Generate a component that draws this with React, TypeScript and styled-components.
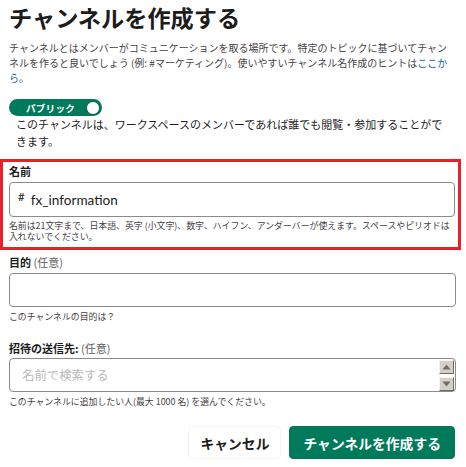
import React from "react";
import styled, { createGlobalStyle } from "styled-components";

const GlobalStyle = createGlobalStyle`
  html, body { margin: 0; padding: 0; background: #ffffff; }
  body {
    font-family: "Lato", "Noto Sans CJK JP", sans-serif;
    color: #1d1c1d;
  }
  * { box-sizing: border-box; }
`;

const JP = `"Noto Sans CJK JP", "Noto Sans", sans-serif`;
const GREEN = "#007a5a";

const Page = styled.div`
  width: 466px;
  padding: 2px 10px 0 9px;
  display: flex;
  flex-direction: column;
`;

const Title = styled.h1`
  margin: 0;
  font-family: ${JP};
  font-size: 23.2px;
  line-height: 30px;
  font-weight: 700;
  color: #1d1c1d;
`;

const Description = styled.p`
  margin: 8px 0 0;
  font-family: ${JP};
  font-size: 10px;
  line-height: 15px;
  color: #454245;
`;

const Link = styled.a`
  color: #1264a3;
  text-decoration: none;
`;

const Toggle = styled.div`
  margin-top: 14px;
  align-self: flex-start;
  width: 93px;
  height: 17px;
  border-radius: 9px;
  background: ${GREEN};
  display: flex;
  align-items: center;
  justify-content: space-between;
  padding: 0 2px 0 17px;
`;

const ToggleText = styled.span`
  font-family: ${JP};
  font-size: 9.6px;
  font-weight: 700;
  color: #ffffff;
  letter-spacing: 0.2px;
`;

const Knob = styled.span`
  width: 14px;
  height: 14px;
  border-radius: 50%;
  background: #ffffff;
  border: 1px solid #0b5e44;
`;

const ToggleNote = styled.p`
  margin: 0;
  padding: 0 4px 0 7px;
  font-family: ${JP};
  font-size: 11px;
  line-height: 17px;
  color: #1d1c1d;
`;

const Highlight = styled.section`
  margin: 9px -5px 0 -9px;
  border: 3px solid #e8202a;
  padding: 2px 3px 5px 6px;
  display: flex;
  flex-direction: column;
`;

const Field = styled.div<{ $top: number }>`
  margin-top: ${(p) => p.$top}px;
  display: flex;
  flex-direction: column;
`;

const Label = styled.label`
  font-family: ${JP};
  font-size: 11px;
  line-height: 14px;
  font-weight: 700;
  color: #1d1c1d;
`;

const Optional = styled.span`
  font-weight: 400;
  color: #616061;
`;

const InputBox = styled.div<{ $h: number; $gap: number }>`
  margin-top: ${(p) => p.$gap}px;
  height: ${(p) => p.$h}px;
  border: 1px solid #8b8b8b;
  border-radius: 4px;
  background: #fff;
  display: flex;
  align-items: center;
  padding-left: 8px;
`;

const Hash = styled.span`
  font-family: "Lato", sans-serif;
  font-size: 11.5px;
  color: #1d1c1d;
  margin-right: 6px;
  transform: translateY(-3px);
`;

const Value = styled.span`
  font-family: "Lato", ${JP};
  font-size: 13.6px;
  color: #1d1c1d;
`;

const Placeholder = styled.span`
  font-family: ${JP};
  font-size: 12.4px;
  color: #b9b9b9;
  padding-left: 4px;
`;

const Hint = styled.p<{ $lh: number }>`
  margin: 4px 0 0;
  font-family: ${JP};
  font-size: 8.9px;
  line-height: ${(p) => p.$lh}px;
  color: #454245;
`;

const Spinner = styled.div`
  margin-left: auto;
  margin-right: 1px;
  display: flex;
  flex-direction: column;
  gap: 3px;
`;

const SpinBtn = styled.div`
  width: 15px;
  height: 14px;
  background: #d4d0c8;
  border-top: 1px solid #f3f2ee;
  border-left: 1px solid #f3f2ee;
  border-right: 1px solid #6d6b66;
  border-bottom: 1px solid #6d6b66;
  display: flex;
  align-items: center;
  justify-content: center;
`;

const Actions = styled.div`
  margin-top: 18px;
  display: flex;
  justify-content: flex-end;
  gap: 8px;
  padding-right: 1px;
`;

const Button = styled.button<{ $primary?: boolean }>`
  height: 33px;
  padding: 0 ${(p) => (p.$primary ? 13 : 11)}px;
  border-radius: 4px;
  border: 1px solid ${(p) => (p.$primary ? GREEN : "#f4f4f4")};
  background: ${(p) => (p.$primary ? GREEN : "#ffffff")};
  color: ${(p) => (p.$primary ? "#ffffff" : "#1d1c1d")};
  font-family: ${JP};
  font-size: 13.8px;
  font-weight: 700;
  cursor: pointer;
`;

const Arrow = ({ up }: { up?: boolean }) => (
  <svg width="9" height="6" viewBox="0 0 9 6">
    <polygon points={up ? "4.5,0.5 8.5,5.5 0.5,5.5" : "0.5,0.5 8.5,0.5 4.5,5.5"} fill="#6e6c68" />
  </svg>
);

export default function App() {
  return (
    <>
      <GlobalStyle />
      <Page>
        <Title>チャンネルを作成する</Title>
        <Description>
          チャンネルとはメンバーがコミュニケーションを取る場所です。特定のトピックに基づいてチャンネルを作ると良いでしょう (例: #マーケティング)。使いやすいチャンネル名作成のヒントは
          <Link href="#">ここから</Link>。
        </Description>
        <Toggle>
          <ToggleText>パブリック</ToggleText>
          <Knob />
        </Toggle>
        <ToggleNote>
          このチャンネルは、ワークスペースのメンバーであれば誰でも閲覧・参加することがで
          <br />
          きます。
        </ToggleNote>

        <Highlight>
          <Field $top={0}>
            <Label>名前</Label>
            <InputBox $h={35} $gap={4}>
              <Hash>#</Hash>
              <Value>fx_information</Value>
            </InputBox>
            <Hint $lh={10.5}>
              名前は21文字まで、日本語、英字 (小文字)、数字、ハイフン、アンダーバーが使えます。スペースやピリオドは入れないでください。
            </Hint>
          </Field>
        </Highlight>

        <Field $top={5}>
          <Label>
            目的 <Optional>(任意)</Optional>
          </Label>
          <InputBox $h={34} $gap={4} />
          <Hint $lh={12}>このチャンネルの目的は？</Hint>
        </Field>

        <Field $top={18}>
          <Label>
            招待の送信先: <Optional>(任意)</Optional>
          </Label>
          <InputBox $h={34} $gap={3}>
            <Placeholder>名前で検索する</Placeholder>
            <Spinner>
              <SpinBtn>
                <Arrow up />
              </SpinBtn>
              <SpinBtn>
                <Arrow />
              </SpinBtn>
            </Spinner>
          </InputBox>
          <Hint $lh={12}>このチャンネルに追加したい人(最大 1000 名) を選んでください。</Hint>
        </Field>

        <Actions>
          <Button>キャンセル</Button>
          <Button $primary>チャンネルを作成する</Button>
        </Actions>
      </Page>
    </>
  );
}
